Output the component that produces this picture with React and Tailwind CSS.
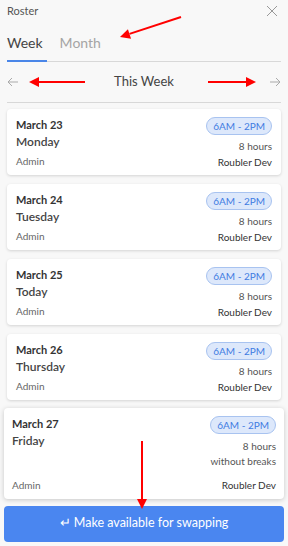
import React from 'react';

const shifts = [
  { date: 'March 23', day: 'Monday' },
  { date: 'March 24', day: 'Tuesday' },
  { date: 'March 25', day: 'Today' },
  { date: 'March 26', day: 'Thursday' },
];

function Pill() {
  return (
    <span className="rounded-full border border-[#a8c3f0] bg-[#dde8fb] px-[6px] py-[2px] text-[10px] leading-[12px] text-[#3f7ce2]">
      6AM - 2PM
    </span>
  );
}

function Arrow({ x1, y1, x2, y2 }) {
  const a = Math.atan2(y2 - y1, x2 - x1);
  const len = 10;
  const w = 5;
  const bx = x2 - len * Math.cos(a);
  const by = y2 - len * Math.sin(a);
  const p1 = `${bx + w * Math.sin(a)},${by - w * Math.cos(a)}`;
  const p2 = `${bx - w * Math.sin(a)},${by + w * Math.cos(a)}`;
  return (
    <g>
      <line x1={x1} y1={y1} x2={bx} y2={by} stroke="#ff0000" strokeWidth="2" />
      <polygon points={`${x2},${y2} ${p1} ${p2}`} fill="#ff0000" />
    </g>
  );
}

export default function App() {
  return (
    <div
      className="relative h-[546px] w-[288px] overflow-hidden bg-[#f8f8f8] text-[#333]"
      style={{ fontFamily: 'Lato, "Noto Sans", sans-serif' }}
    >
      <div className="flex items-center justify-between px-[7px] pt-[3px]">
        <span className="text-[11px] text-[#555]">Roster</span>
        <svg width="12" height="12" viewBox="0 0 12 12" className="mr-[3px]">
          <path d="M1 1L11 11M11 1L1 11" stroke="#999" strokeWidth="1" />
        </svg>
      </div>

      <div className="mx-[7px] mt-[14px] flex border-b border-[#d8d8d8]">
        <div className="-mb-px border-b-[2px] border-[#4a86e8] pb-[8px] pr-[4px] text-[14px] leading-[18px] text-[#444]">
          Week
        </div>
        <div className="ml-[13px] pb-[8px] text-[14px] leading-[18px] text-[#a5a5a5]">Month</div>
      </div>

      <div className="mx-[7px] flex h-[41px] items-center justify-between border-b border-[#d8d8d8]">
        <svg width="12" height="10" viewBox="0 0 12 10">
          <path d="M11 5H1M5 1L1 5L5 9" stroke="#aaa" strokeWidth="1" fill="none" />
        </svg>
        <span className="text-[13px] text-[#444]">This Week</span>
        <svg width="12" height="10" viewBox="0 0 12 10">
          <path d="M1 5H11M7 1L11 5L7 9" stroke="#aaa" strokeWidth="1" fill="none" />
        </svg>
      </div>

      <div className="mx-[7px] mt-[6px] flex flex-col gap-[9px]">
        {shifts.map((s) => (
          <div
            key={s.date}
            className="flex h-[66px] justify-between rounded-[4px] bg-white px-[9px] pt-[8px] shadow-[0_1px_3px_rgba(0,0,0,0.15)]"
          >
            <div className="flex flex-col">
              <span className="text-[11px] font-bold leading-[16px] text-[#333]">{s.date}</span>
              <span className="text-[12px] font-semibold leading-[18px] text-[#444]">{s.day}</span>
              <span className="mt-[4px] text-[10px] leading-[12px] text-[#666]">Admin</span>
            </div>
            <div className="flex flex-col items-end">
              <Pill />
              <span className="mt-[5px] text-[10px] leading-[12px] text-[#555]">8 hours</span>
              <span className="mt-[4px] text-[10px] leading-[12px] text-[#333]">Roubler Dev</span>
            </div>
          </div>
        ))}
      </div>

      <div className="mx-[4px] mt-[8px] flex h-[91px] justify-between rounded-[4px] bg-white px-[8px] pt-[8px] pb-[8px] shadow-[0_1px_5px_rgba(0,0,0,0.2)]">
        <div className="flex flex-col">
          <span className="text-[11px] font-bold leading-[16px] text-[#333]">March 27</span>
          <span className="text-[12px] font-semibold leading-[18px] text-[#444]">Friday</span>
          <span className="mt-auto text-[10px] leading-[12px] text-[#666]">Admin</span>
        </div>
        <div className="flex flex-col items-end">
          <Pill />
          <span className="mt-[6px] text-[10px] leading-[12px] text-[#555]">8 hours</span>
          <span className="mt-[3px] text-[10px] leading-[12px] text-[#555]">without breaks</span>
          <span className="mt-auto text-[10px] leading-[12px] text-[#333]">Roubler Dev</span>
        </div>
      </div>

      <button className="mx-[4px] mt-[7px] flex h-[36px] w-[280px] items-center justify-center rounded-[4px] bg-[#4a86f0] text-[12.5px] text-white">
        ↵ Make available for swapping
      </button>

      <svg className="pointer-events-none absolute left-0 top-0" width="288" height="546">
        <Arrow x1={181} y1={17} x2={120} y2={37} />
        <Arrow x1={85} y1={82} x2={29} y2={82} />
        <Arrow x1={208} y1={82} x2={256} y2={82} />
        <Arrow x1={142} y1={441} x2={142} y2={509} />
      </svg>
    </div>
  );
}
